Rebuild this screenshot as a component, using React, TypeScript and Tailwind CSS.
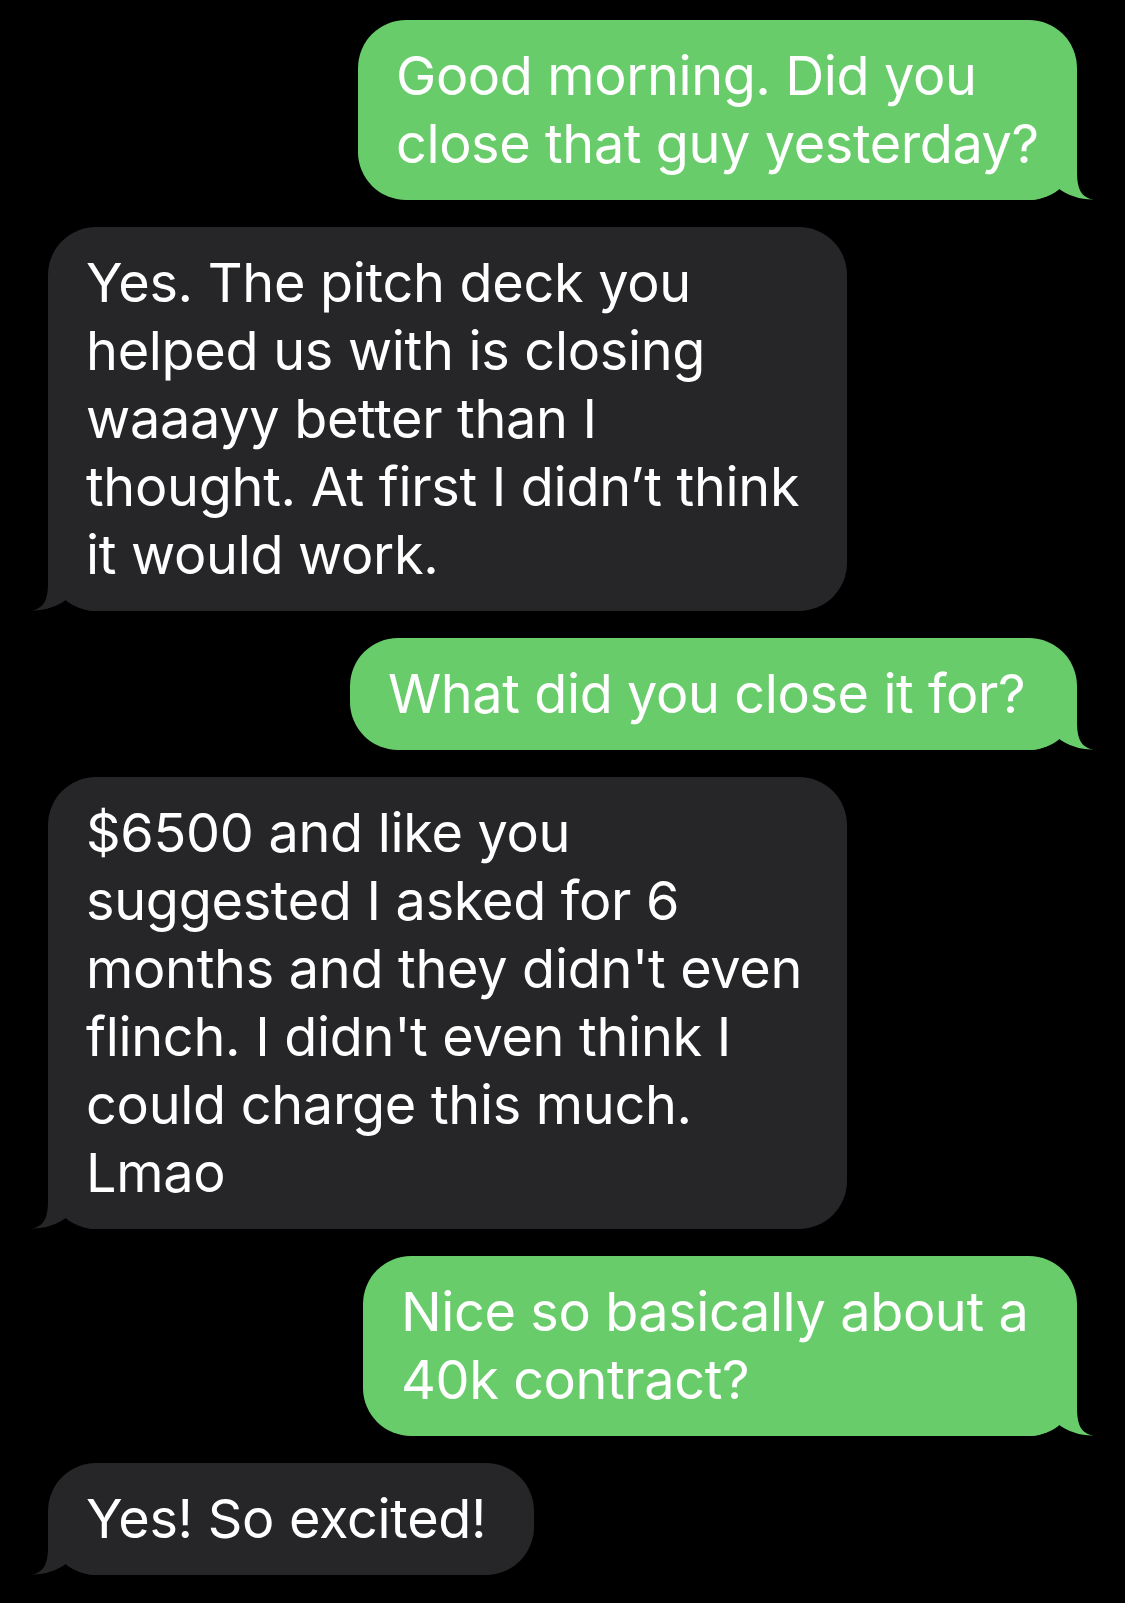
const GREEN = '#68cc6a';
const GRAY = '#262628';

type Msg = { from: 'me' | 'them'; lines: string[]; width: string };

const messages: Msg[] = [
  { from: 'me', lines: ['Good morning. Did you', 'close that guy yesterday?'], width: 'w-[719px]' },
  {
    from: 'them',
    lines: [
      'Yes. The pitch deck you',
      'helped us with is closing',
      'waaayy better than I',
      'thought. At first I didn\u2019t think',
      'it would work.',
    ],
    width: 'w-[799px]',
  },
  { from: 'me', lines: ['What did you close it for?'], width: 'w-[727px]' },
  {
    from: 'them',
    lines: [
      '$6500 and like you',
      'suggested I asked for 6',
      "months and they didn't even",
      "flinch. I didn't even think I",
      'could charge this much.',
      'Lmao',
    ],
    width: 'w-[799px]',
  },
  { from: 'me', lines: ['Nice so basically about a', '40k contract?'], width: 'w-[714px]' },
  { from: 'them', lines: ['Yes! So excited!'], width: 'w-[486px]' },
];

// bubble edge sits at x=53 (right) / x=17 (left), bubble bottom at y=50
const TailRight = () => (
  <svg
    className="absolute bottom-0 right-[-17px] pointer-events-none"
    width="70"
    height="50"
    viewBox="0 0 70 50"
  >
    <path
      d="M53 0 L53 22 C53 40 58 48 70 49.5 C58 50 44 46 34 38 C28 44 18 50 6 50 L0 50 L0 0 Z"
      fill={GREEN}
    />
  </svg>
);

const TailLeft = () => (
  <svg
    className="absolute bottom-0 left-[-17px] pointer-events-none"
    width="70"
    height="50"
    viewBox="0 0 70 50"
  >
    <path
      d="M17 0 L17 22 C17 40 12 48 0 49.5 C12 50 26 46 36 38 C42 44 52 50 64 50 L70 50 L70 0 Z"
      fill={GRAY}
    />
  </svg>
);

const Bubble = ({ msg }: { msg: Msg }) => {
  const mine = msg.from === 'me';
  return (
    <div className={mine ? 'flex justify-end' : 'flex justify-start'}>
      <div
        className={
          'relative rounded-[48px] px-[38px] py-[22px] text-white ' +
          msg.width +
          (mine ? ' bg-[#68cc6a]' : ' bg-[#262628]')
        }
      >
        {mine ? <TailRight /> : <TailLeft />}
        <div
          className={
            'relative text-[54px] leading-[68px] whitespace-nowrap ' +
            (mine ? 'tracking-[-0.4px]' : 'tracking-[-0.3px]')
          }
        >
          {msg.lines.map((l, i) => (
            <div key={i}>{l}</div>
          ))}
        </div>
      </div>
    </div>
  );
};

export default function App() {
  return (
    <div
      className="min-h-[1603px] w-[1125px] bg-black px-12 pt-5 pb-7 flex flex-col gap-[27px]"
      style={{ fontFamily: 'Inter, "Noto Sans", "Liberation Sans", sans-serif' }}
    >
      {messages.map((m, i) => (
        <Bubble key={i} msg={m} />
      ))}
    </div>
  );
}
